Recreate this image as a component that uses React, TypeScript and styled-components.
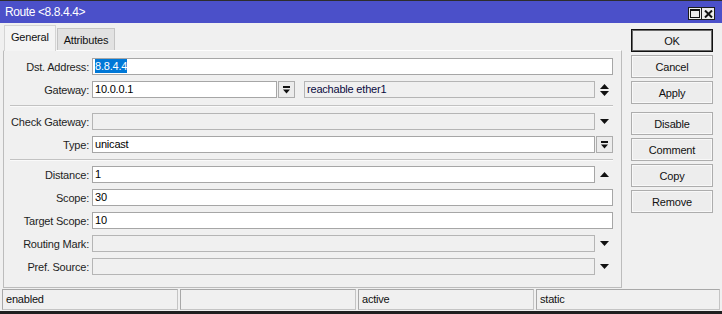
import React from 'react';
import styled, { createGlobalStyle } from 'styled-components';

const GlobalStyle = createGlobalStyle`
	html, body {
		margin: 0;
		padding: 0;
		background: #f0f0f0;
	}
	body {
		font-family: "Liberation Sans", Arial, sans-serif;
		font-size: 11px;
		color: #000;
	}
	* {
		box-sizing: border-box;
	}
`;

const DownArrow = () => (
	<svg width='9' height='5' viewBox='0 0 9 5'>
		<polygon points='0,0 9,0 4.5,5' fill='#111' />
	</svg>
);

const UpArrow = () => (
	<svg width='9' height='5' viewBox='0 0 9 5'>
		<polygon points='0,5 9,5 4.5,0' fill='#111' />
	</svg>
);

const UpDownArrows = () => (
	<svg width='9' height='12' viewBox='0 0 9 12'>
		<polygon points='0,5 9,5 4.5,0' fill='#111' />
		<polygon points='0,7 9,7 4.5,12' fill='#111' />
	</svg>
);

const DropListIcon = () => (
	<svg width='7' height='8' viewBox='0 0 7 8'>
		<rect x='0' y='0' width='7' height='2' fill='#111' />
		<polygon points='0,3.5 7,3.5 3.5,7.5' fill='#111' />
	</svg>
);

const MaximizeIcon = () => (
	<svg width='10' height='9' viewBox='0 0 10 9'>
		<rect x='0.5' y='0.5' width='9' height='8' fill='none' stroke='#111' />
		<rect x='0' y='0' width='10' height='2' fill='#111' />
	</svg>
);

const CloseIcon = () => (
	<svg width='9' height='8' viewBox='0 0 9 8'>
		<path d='M1 0.5 L8 7.5 M8 0.5 L1 7.5' stroke='#111' strokeWidth='2' />
	</svg>
);

export default function App() {
	return (
		<>
			<GlobalStyle />
			<Window>
				<TitleBar>
					<Title>Route &lt;8.8.4.4&gt;</Title>
					<TitleButtons>
						<TitleButton>
							<MaximizeIcon />
						</TitleButton>
						<TitleButton>
							<CloseIcon />
						</TitleButton>
					</TitleButtons>
				</TitleBar>
				<Body>
					<LeftColumn>
						<TabStrip>
							<Tab $active>General</Tab>
							<Tab>Attributes</Tab>
						</TabStrip>
						<Panel>
							<Row>
								<Label>Dst. Address:</Label>
								<Controls>
									<Field>
										<Selected>8.8.4.4</Selected>
									</Field>
								</Controls>
							</Row>
							<Row>
								<Label>Gateway:</Label>
								<Controls>
									<Field $width={185}>10.0.0.1</Field>
									<SmallButton>
										<DropListIcon />
									</SmallButton>
									<GatewayStatus $readOnly>
										reachable ether1
									</GatewayStatus>
									<ArrowSlot>
										<UpDownArrows />
									</ArrowSlot>
								</Controls>
							</Row>
							<Separator $space={1} />
							<Row>
								<Label>Check Gateway:</Label>
								<Controls>
									<Field $readOnly />
									<ArrowSlot>
										<DownArrow />
									</ArrowSlot>
								</Controls>
							</Row>
							<Row>
								<Label>Type:</Label>
								<Controls>
									<Field>unicast</Field>
									<SmallButton>
										<DropListIcon />
									</SmallButton>
								</Controls>
							</Row>
							<Separator $space={0} />
							<Row>
								<Label>Distance:</Label>
								<Controls>
									<Field>1</Field>
									<ArrowSlot>
										<UpArrow />
									</ArrowSlot>
								</Controls>
							</Row>
							<Row>
								<Label>Scope:</Label>
								<Controls>
									<Field>30</Field>
								</Controls>
							</Row>
							<Row>
								<Label>Target Scope:</Label>
								<Controls>
									<Field>10</Field>
								</Controls>
							</Row>
							<Row>
								<Label>Routing Mark:</Label>
								<Controls>
									<Field $readOnly />
									<ArrowSlot>
										<DownArrow />
									</ArrowSlot>
								</Controls>
							</Row>
							<Row>
								<Label>Pref. Source:</Label>
								<Controls>
									<Field $readOnly />
									<ArrowSlot>
										<DownArrow />
									</ArrowSlot>
								</Controls>
							</Row>
						</Panel>
					</LeftColumn>
					<ButtonColumn>
						<ButtonGroup>
							<Button $default>OK</Button>
							<Button>Cancel</Button>
							<Button>Apply</Button>
						</ButtonGroup>
						<ButtonGroup>
							<Button>Disable</Button>
							<Button>Comment</Button>
							<Button>Copy</Button>
							<Button>Remove</Button>
						</ButtonGroup>
					</ButtonColumn>
				</Body>
				<StatusBar>
					<StatusCell>enabled</StatusCell>
					<StatusCell />
					<StatusCell>active</StatusCell>
					<StatusCell>static</StatusCell>
				</StatusBar>
			</Window>
		</>
	);
}

const Window = styled.div`
	width: 722px;
	height: 314px;
	display: flex;
	flex-direction: column;
	background: #f0f0f0;
	border-top: 1px solid #2d2d2d;
	border-bottom: 3px solid #1f1f1f;
	overflow: hidden;
`;

const TitleBar = styled.div`
	height: 22px;
	flex: none;
	display: flex;
	background: #4b50c9;
	color: #fff;
	padding: 0 7px 0 5px;
`;

const Title = styled.span`
	flex: 1;
	padding-top: 3px;
	font-size: 12px;
	line-height: 16px;
	letter-spacing: -0.4px;
	white-space: nowrap;
`;

const TitleButtons = styled.div`
	display: flex;
	align-self: flex-end;
	margin-bottom: 3px;
`;

const TitleButton = styled.div`
	width: 14px;
	height: 13px;
	margin-left: -1px;
	display: flex;
	align-items: center;
	justify-content: center;
	background: #ececec;
	border: 1px solid #1c1c1c;
`;

const Body = styled.div`
	flex: 1;
	min-height: 0;
	display: flex;
	gap: 9px;
	padding: 2px 0 1px 3px;
`;

const LeftColumn = styled.div`
	width: 619px;
	display: flex;
	flex-direction: column;
`;

const TabStrip = styled.div`
	height: 25px;
	flex: none;
	display: flex;
	align-items: flex-end;
	padding-left: 1px;
	gap: 1px;
`;

interface ITabProps {
	$active?: boolean;
}

const Tab = styled.div<ITabProps>`
	position: relative;
	z-index: ${props => (props.$active ? 1 : 0)};
	height: ${props => (props.$active ? 26 : 22)}px;
	margin-bottom: ${props => (props.$active ? -1 : 0)}px;
	padding: 5px 6px 0;
	line-height: 13px;
	letter-spacing: -0.2px;
	background: ${props => (props.$active ? '#f4f4f4' : '#e2e2e2')};
	border: 1px solid ${props => (props.$active ? '#d4d4d4' : '#c4c4c4')};
	border-bottom: none;
	color: #111;
`;

const Panel = styled.div`
	flex: 1;
	display: flex;
	flex-direction: column;
	gap: 6px;
	padding: 7px 8px 0 0;
	background: #f0f0f0;
	border: 1px solid #bcbcbc;
	border-top-color: #fdfdfd;
`;

const Row = styled.div`
	display: grid;
	grid-template-columns: 85px 1fr;
	column-gap: 3px;
	align-items: center;
	height: 17px;
`;

const Label = styled.label`
	text-align: right;
	white-space: nowrap;
	color: #1e1e1e;
	letter-spacing: -0.2px;
`;

const Controls = styled.div`
	display: flex;
	gap: 1px;
	height: 17px;
	min-width: 0;
`;

interface IFieldProps {
	$readOnly?: boolean;
	$width?: number;
}

const Field = styled.div<IFieldProps>`
	flex: ${props => (props.$width ? `0 0 ${props.$width}px` : '1')};
	min-width: 0;
	height: 17px;
	padding: 0 2px;
	line-height: 15px;
	letter-spacing: -0.2px;
	white-space: nowrap;
	overflow: hidden;
	color: #000;
	background: ${props => (props.$readOnly ? '#f0f0f0' : '#fff')};
	border: 1px solid ${props => (props.$readOnly ? '#b5b5b5' : '#a6a6a6')};
`;

const GatewayStatus = styled(Field)`
	margin-left: 8px;
	color: #0a0a40;
`;

const Selected = styled.span`
	background: #0078d7;
	color: #fff;
	padding: 1px 0;
`;

const SmallButton = styled.div`
	flex: 0 0 17px;
	height: 17px;
	display: flex;
	align-items: center;
	justify-content: center;
	background: #ececec;
	border: 1px solid #adadad;
`;

const ArrowSlot = styled.div`
	flex: 0 0 17px;
	height: 17px;
	display: flex;
	align-items: center;
	justify-content: center;
`;

interface ISeparatorProps {
	$space: number;
}

const Separator = styled.div<ISeparatorProps>`
	height: 1px;
	flex: none;
	margin: ${props => props.$space}px 0 ${props => props.$space}px 6px;
	background: #c2c2c2;
	box-shadow: 0 1px 0 #fafafa;
`;

const ButtonColumn = styled.div`
	width: 82px;
	display: flex;
	flex-direction: column;
	gap: 8px;
	padding-top: 4px;
`;

const ButtonGroup = styled.div`
	display: flex;
	flex-direction: column;
	gap: 3px;
`;

interface IButtonProps {
	$default?: boolean;
}

const Button = styled.div<IButtonProps>`
	height: 23px;
	display: flex;
	align-items: center;
	justify-content: center;
	background: #ededed;
	color: #111;
	letter-spacing: -0.2px;
	border: 1px solid ${props => (props.$default ? '#111' : '#adadad')};
	box-shadow: ${props =>
		props.$default ? 'inset 0 0 0 1px #6a6a6a' : 'inset 0 0 0 1px #f8f8f8'};
`;

const StatusBar = styled.div`
	height: 21px;
	flex: none;
	margin-bottom: 1px;
	padding: 0 2px;
	display: grid;
	grid-template-columns: 176px 176px 176px 1fr;
	column-gap: 2px;
`;

const StatusCell = styled.div`
	padding-left: 3px;
	line-height: 19px;
	letter-spacing: -0.2px;
	color: #111;
	border: 1px solid #c4c4c4;
	border-top-color: #a8a8a8;
	border-left-color: #a8a8a8;
`;
